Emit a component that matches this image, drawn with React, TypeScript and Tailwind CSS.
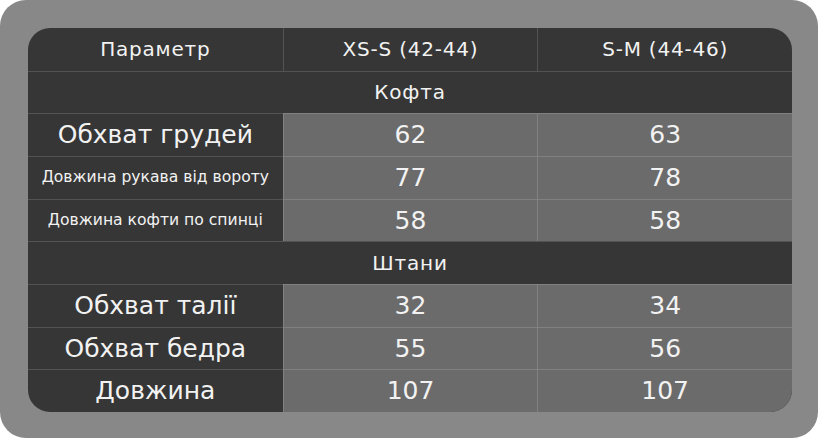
import React from 'react'

type Row =
    | { kind: 'section'; title: string }
    | { kind: 'data'; label: string; small?: boolean; a: string; b: string }

const rows: Row[] = [
    { kind: 'section', title: 'Кофта' },
    { kind: 'data', label: 'Обхват грудей', a: '62', b: '63' },
    { kind: 'data', label: 'Довжина рукава від вороту', small: true, a: '77', b: '78' },
    { kind: 'data', label: 'Довжина кофти по спинці', small: true, a: '58', b: '58' },
    { kind: 'section', title: 'Штани' },
    { kind: 'data', label: 'Обхват талії', a: '32', b: '34' },
    { kind: 'data', label: 'Обхват бедра', a: '55', b: '56' },
    { kind: 'data', label: 'Довжина', a: '107', b: '107' },
]

const cell = 'flex items-center justify-center border-t border-white/15'
const head = 'text-[20px] tracking-[0.8px]'

export default function App() {
    return (
        <div
            className="h-[440px] w-[820px] bg-white"
            style={{ fontFamily: '"DejaVu Sans", sans-serif' }}
        >
            <div className="h-[438px] w-[818px] rounded-[26px] bg-[#888888] p-[28px] pr-[26px]">
                <div className="grid h-[384px] w-[764px] grid-cols-3 grid-rows-9 overflow-hidden rounded-[22px] bg-[#363636] text-[#f2f2f2]">
                    <div className={`flex items-center justify-center ${head}`}>
                        Параметр
                    </div>
                    <div className={`flex items-center justify-center border-l border-white/15 ${head}`}>
                        XS-S (42-44)
                    </div>
                    <div className={`flex items-center justify-center border-l border-white/15 ${head}`}>
                        S-M (44-46)
                    </div>
                    {rows.map((row, i) =>
                        row.kind === 'section' ? (
                            <div key={i} className={`${cell} col-span-3 ${head}`}>
                                {row.title}
                            </div>
                        ) : (
                            <React.Fragment key={i}>
                                <div
                                    className={`${cell} ${row.small ? 'text-[15.6px]' : 'text-[25px]'}`}
                                >
                                    {row.label}
                                </div>
                                <div className={`${cell} border-l bg-[#6b6b6b] text-[25px]`}>
                                    {row.a}
                                </div>
                                <div className={`${cell} border-l bg-[#6b6b6b] text-[25px]`}>
                                    {row.b}
                                </div>
                            </React.Fragment>
                        ),
                    )}
                </div>
            </div>
        </div>
    )
}
